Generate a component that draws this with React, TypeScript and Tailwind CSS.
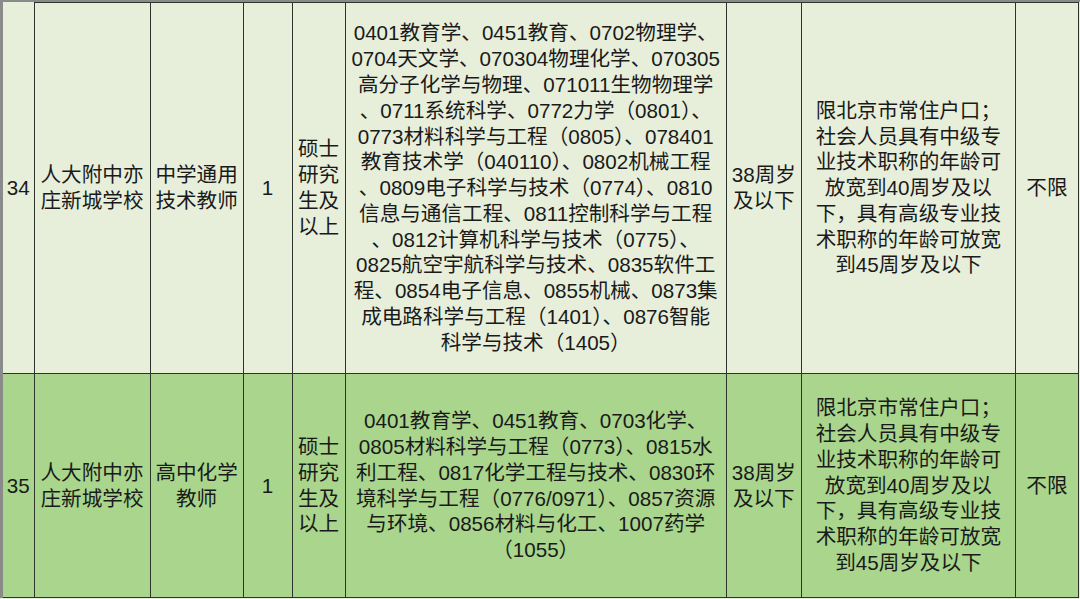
const majors34 = [
  '0401教育学、0451教育、0702物理学、',
  '0704天文学、070304物理化学、070305',
  '高分子化学与物理、071011生物物理学',
  '、0711系统科学、0772力学（0801）、',
  '0773材料科学与工程（0805）、078401',
  '教育技术学（040110）、0802机械工程',
  '、0809电子科学与技术（0774）、0810',
  '信息与通信工程、0811控制科学与工程',
  '、0812计算机科学与技术（0775）、',
  '0825航空宇航科学与技术、0835软件工',
  '程、0854电子信息、0855机械、0873集',
  '成电路科学与工程（1401）、0876智能',
  '科学与技术（1405）',
]

const majors35 = [
  '0401教育学、0451教育、0703化学、',
  '0805材料科学与工程（0773）、0815水',
  '利工程、0817化学工程与技术、0830环',
  '境科学与工程（0776/0971）、0857资源',
  '与环境、0856材料与化工、1007药学',
  '（1055）',
]

const otherReq = [
  '限北京市常住户口；',
  '社会人员具有中级专',
  '业技术职称的年龄可',
  '放宽到40周岁及以',
  '下，具有高级专业技',
  '术职称的年龄可放宽',
  '到45周岁及以下',
]

type Row = {
  no: string
  school: string[]
  post: string[]
  count: string
  majors: string[]
  bg: string
  height: string
}

const rows: Row[] = [
  {
    no: '34',
    school: ['人大附中亦', '庄新城学校'],
    post: ['中学通用', '技术教师'],
    count: '1',
    majors: majors34,
    bg: 'bg-[#e7efdb]',
    height: 'h-[371px]',
  },
  {
    no: '35',
    school: ['人大附中亦', '庄新城学校'],
    post: ['高中化学', '教师'],
    count: '1',
    majors: majors35,
    bg: 'bg-[#a9d58c]',
    height: 'h-[224px]',
  },
]

function Lines({ lines }: { lines: string[] }) {
  return (
    <>
      {lines.map((l, i) => (
        <div key={i} className="whitespace-nowrap">
          {l}
        </div>
      ))}
    </>
  )
}

const cell = 'border border-[#2e332b] text-center align-middle p-0'

export default function App() {
  return (
    <div
      className="w-[1080px] h-[599px] overflow-hidden bg-[#e7efdb] text-[#1a1a1a] text-[20.6px] leading-[25.8px]"
      style={{ fontFamily: '"Liberation Sans", "Noto Sans CJK SC", sans-serif' }}
    >
      <div className="border-t-2 border-l-[3px] border-[#8a8a8a]">
        <table className="table-fixed border-collapse w-[1076px]">
          <colgroup>
            <col className="w-[31px]" />
            <col className="w-[116px]" />
            <col className="w-[93px]" />
            <col className="w-[49px]" />
            <col className="w-[53px]" />
            <col className="w-[381px]" />
            <col className="w-[75px]" />
            <col className="w-[214px]" />
            <col className="w-[63px]" />
          </colgroup>
          <tbody>
            {rows.map((r) => (
              <tr key={r.no} className={`${r.bg} ${r.height}`}>
                <td className={`${cell} border-l-0 border-t-0`}>{r.no}</td>
                <td className={cell}>
                  <Lines lines={r.school} />
                </td>
                <td className={cell}>
                  <Lines lines={r.post} />
                </td>
                <td className={cell}>{r.count}</td>
                <td className={cell}>
                  <Lines lines={['硕士', '研究', '生及', '以上']} />
                </td>
                <td className={cell}>
                  <Lines lines={r.majors} />
                </td>
                <td className={cell}>
                  <Lines lines={['38周岁', '及以下']} />
                </td>
                <td className={cell}>
                  <Lines lines={otherReq} />
                </td>
                <td className={cell}>不限</td>
              </tr>
            ))}
          </tbody>
        </table>
      </div>
    </div>
  )
}
